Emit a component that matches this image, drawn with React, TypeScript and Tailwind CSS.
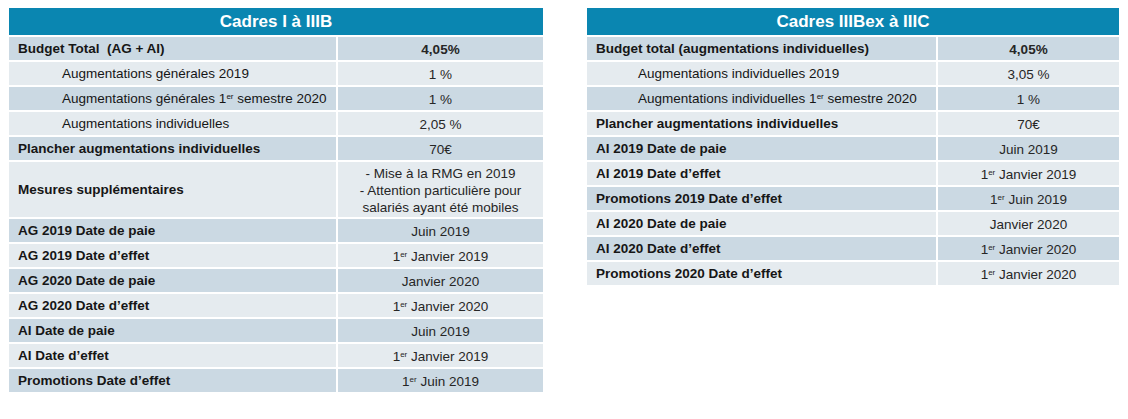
import React from 'react';

type Row = {
  label: React.ReactNode;
  value: React.ReactNode;
  bold?: boolean;
  indent?: boolean;
  boldValue?: boolean;
  tall?: boolean;
};

const Er = () => <sup className="text-[8px] relative top-[1px] align-super leading-none">er</sup>;

const leftRows: Row[] = [
  { label: <>Budget Total&nbsp; (AG + AI)</>, value: '4,05%', bold: true, boldValue: true },
  { label: 'Augmentations générales 2019', value: '1 %', indent: true },
  { label: <>Augmentations générales 1<Er /> semestre 2020</>, value: '1 %', indent: true },
  { label: 'Augmentations individuelles', value: '2,05 %', indent: true },
  { label: 'Plancher augmentations individuelles', value: '70€', bold: true },
  {
    label: 'Mesures supplémentaires',
    value: (
      <>
        - Mise à la RMG en 2019
        <br />- Attention particulière pour
        <br />
        salariés ayant été mobiles
      </>
    ),
    bold: true,
    tall: true,
  },
  { label: 'AG 2019 Date de paie', value: 'Juin 2019', bold: true },
  { label: 'AG 2019 Date d’effet', value: <>1<Er /> Janvier 2019</>, bold: true },
  { label: 'AG 2020 Date de paie', value: 'Janvier 2020', bold: true },
  { label: 'AG 2020 Date d’effet', value: <>1<Er /> Janvier 2020</>, bold: true },
  { label: 'AI Date de paie', value: 'Juin 2019', bold: true },
  { label: 'AI Date d’effet', value: <>1<Er /> Janvier 2019</>, bold: true },
  { label: 'Promotions Date d’effet', value: <>1<Er /> Juin 2019</>, bold: true },
];

const rightRows: Row[] = [
  { label: 'Budget total (augmentations individuelles)', value: '4,05%', bold: true, boldValue: true },
  { label: 'Augmentations individuelles 2019', value: '3,05 %', indent: true },
  { label: <>Augmentations individuelles 1<Er /> semestre 2020</>, value: '1 %', indent: true },
  { label: 'Plancher augmentations individuelles', value: '70€', bold: true },
  { label: 'AI 2019 Date de paie', value: 'Juin 2019', bold: true },
  { label: 'AI 2019 Date d’effet', value: <>1<Er /> Janvier 2019</>, bold: true },
  { label: 'Promotions 2019 Date d’effet', value: <>1<Er /> Juin 2019</>, bold: true },
  { label: 'AI 2020 Date de paie', value: 'Janvier 2020', bold: true },
  { label: 'AI 2020 Date d’effet', value: <>1<Er /> Janvier 2020</>, bold: true },
  { label: 'Promotions 2020 Date d’effet', value: <>1<Er /> Janvier 2020</>, bold: true },
];

function Table({
  title,
  rows,
  cols,
  indentClass,
}: {
  title: string;
  rows: Row[];
  cols: string;
  indentClass: string;
}) {
  return (
    <div className={`grid ${cols} gap-x-[2px] gap-y-[2px]`}>
      <div className="col-span-2 h-[27px] bg-[#0a86b1] flex items-center justify-center pt-[1px] text-white font-bold text-[17px]">
        {title}
      </div>
      {rows.map((r, i) => {
        const bg = i % 2 === 0 ? 'bg-[#cbd9e3]' : 'bg-[#e5ebef]';
        const h = r.tall ? 'h-[55px]' : 'h-[23px]';
        return (
          <React.Fragment key={i}>
            <div
              className={`${bg} ${h} flex items-center pt-[2px] text-[13.5px] text-[#161616] whitespace-nowrap ${
                r.bold ? 'font-bold pl-[9px]' : indentClass
              }`}
            >
              <span>{r.label}</span>
            </div>
            <div
              className={`${bg} ${h} flex items-center justify-center pt-[2px] text-center text-[13.5px] leading-[17px] text-[#262626] ${
                r.boldValue ? 'font-bold' : ''
              }`}
            >
              <span>{r.value}</span>
            </div>
          </React.Fragment>
        );
      })}
    </div>
  );
}

export default function App() {
  return (
    <div
      className="w-[1128px] h-[419px] bg-white pt-[8px] pl-[9px] flex items-start gap-[44px]"
      style={{ fontFamily: '"Liberation Sans", Arial, sans-serif' }}
    >
      <Table title="Cadres I à IIIB" rows={leftRows} cols="grid-cols-[327px_205px]" indentClass="pl-[53px]" />
      <Table title="Cadres IIIBex à IIIC" rows={rightRows} cols="grid-cols-[349px_181px]" indentClass="pl-[51px]" />
    </div>
  );
}
